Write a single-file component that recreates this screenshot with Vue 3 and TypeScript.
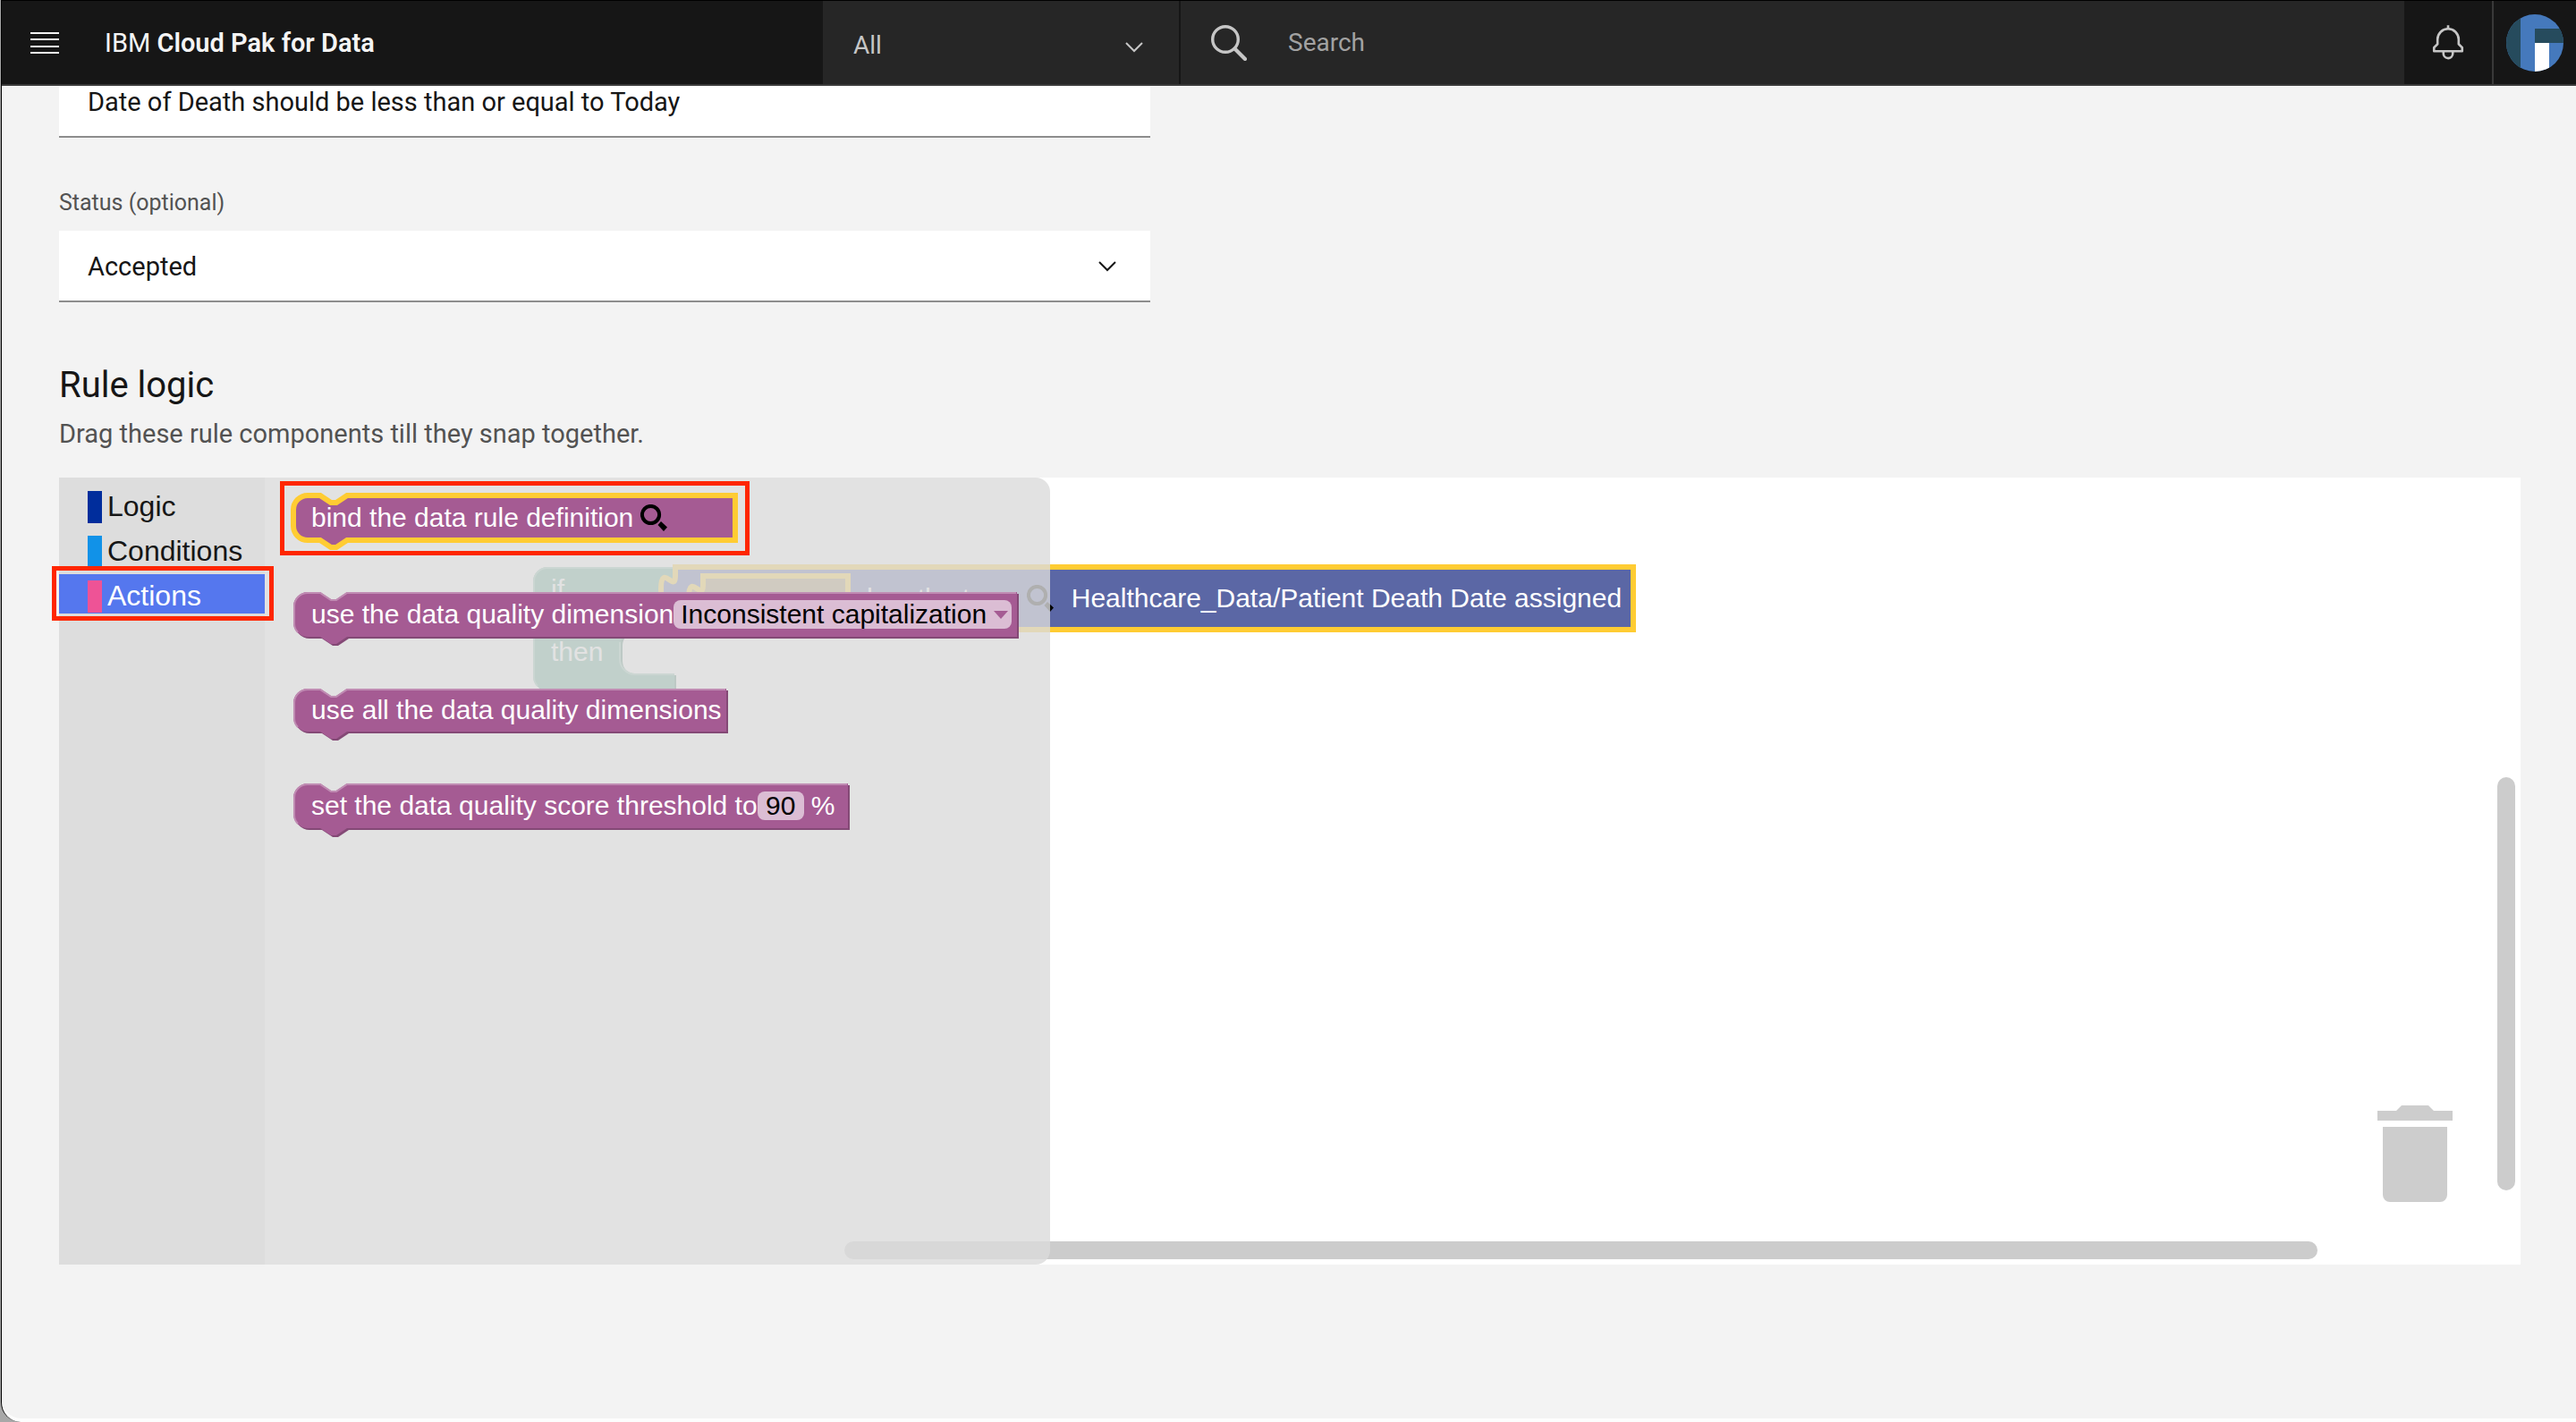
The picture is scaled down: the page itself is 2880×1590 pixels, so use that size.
<script setup lang="ts">
import { ref } from 'vue'

interface Category {
  name: string
  color: string
}

interface ActionBlock {
  id: string
  x: number
  y: number
  w: number
  h: number
  label: string
  kind: 'search' | 'dropdown' | 'plain' | 'number'
  selected?: boolean
}

const categories: Category[] = [
  { name: 'Logic', color: '#002d9c' },
  { name: 'Conditions', color: '#1192e8' },
  { name: 'Actions', color: '#ee5396' },
]
const active = ref('Actions')

const scope = ref('All')
const query = ref('')
const description = ref('Date of Death should be less than or equal to Today')
const status = ref('Accepted')
const dimension = ref('Inconsistent capitalization')
const threshold = ref('90')

const actions: ActionBlock[] = [
  { id: 'bind', x: 32, y: 20, w: 494, h: 50, label: 'bind the data rule definition', kind: 'search', selected: true },
  { id: 'use', x: 32, y: 128, w: 809, h: 50, label: 'use the data quality dimension', kind: 'dropdown' },
  { id: 'all', x: 32, y: 236, w: 484, h: 48, label: 'use all the data quality dimensions', kind: 'plain' },
  { id: 'set', x: 32, y: 342, w: 620, h: 50, label: 'set the data quality score threshold to', kind: 'number' },
]

const notch = 'l12 8h6l12 -8'

function outline(w: number, h: number): string {
  return `M0 16A16 16 0 0 1 16 0H30${notch}H${w}V${h}H60l-12 8h-6l-12 -8H16A16 16 0 0 1 0 ${h - 16}Z`
}

function highlight(w: number, h: number): string {
  return `M5 ${h - 5}A15 15 0 0 1 1 ${h - 16}V16A15 15 0 0 1 16 1H30${notch}H${w - 1}`
}

const socket = 'c0 20 -16 -16 -16 15s16 -5 16 15'
const socketUp = 'c0 -20 -16 16 -16 -15s16 5 16 -15'

const ifOutline = `M0 16A16 16 0 0 1 16 0H158V10${socket}V70H114a16 16 0 0 0 -16 16V103a16 16 0 0 0 16 16H158V138H16A16 16 0 0 1 0 122Z`

function valueOutline(w: number, h: number): string {
  return `M0 0H${w}V${h}H0V40${socketUp}Z`
}
</script>

<template>
  <div class="desktop">
    <div class="window">
      <header class="bar">
        <div class="bar-brand">
          <button class="menu" type="button" aria-label="Menu">
            <svg width="32" height="24" viewBox="0 0 32 24" fill="#f4f4f4">
              <path d="M0 0h32v2H0zM0 7h32v2H0zM0 15h32v2H0zM0 22h32v2H0z" />
            </svg>
          </button>
          <a class="brand" href="#">IBM <b>Cloud Pak for Data</b></a>
        </div>
        <div class="scope">
          <select v-model="scope" aria-label="Search scope">
            <option>All</option>
          </select>
          <svg class="chevron" width="20" height="12" viewBox="0 0 20 12" fill="none" stroke="#c6c6c6" stroke-width="2">
            <path d="M1 1l9 9 9-9" />
          </svg>
        </div>
        <label class="search">
          <svg width="40" height="40" viewBox="0 0 40 40" fill="none" stroke="#c6c6c6">
            <circle cx="16" cy="16" r="14.3" stroke-width="3.4" />
            <path d="M26.5 26.5L38 38" stroke-width="4.2" stroke-linecap="round" />
          </svg>
          <input v-model="query" type="text" placeholder="Search" aria-label="Search" />
        </label>
        <button class="bell" type="button" aria-label="Notifications">
          <svg width="42" height="42" viewBox="0 0 32 32" fill="#c6c6c6">
            <path d="M28.707 19.293L26 16.586V13a10.014 10.014 0 0 0-9-9.95V1h-2v2.05A10.014 10.014 0 0 0 6 13v3.586l-2.707 2.707A1 1 0 0 0 3 20v3a1 1 0 0 0 1 1h7v.777a5.152 5.152 0 0 0 4.5 5.199A5.006 5.006 0 0 0 21 25v-1h7a1 1 0 0 0 1-1v-3a1 1 0 0 0-.293-.707zM19 25a3 3 0 0 1-6 0v-1h6zm8-3H5v-1.586l2.707-2.707A1 1 0 0 0 8 17v-4a8 8 0 0 1 16 0v4a1 1 0 0 0 .293.707L27 20.414z" />
          </svg>
        </button>
        <button class="account" type="button" aria-label="Account">
          <svg width="64" height="64" viewBox="0 0 64 64">
            <clipPath id="avatar"><circle cx="32" cy="32" r="32" /></clipPath>
            <g clip-path="url(#avatar)">
              <path fill="#4579bc" d="M0 0h64v64H0z" />
              <path fill="#264b5d" d="M0 0h16v64H0zM32 16h32v16H32z" />
              <path fill="#fff" d="M32 32h16v32H32z" />
            </g>
          </svg>
        </button>
      </header>

      <main class="page">
        <input v-model="description" class="field-text" type="text" aria-label="Description" />

        <label class="field-label" for="status">Status (optional)</label>
        <div class="field-select">
          <select id="status" v-model="status">
            <option>Accepted</option>
          </select>
          <svg class="chevron" width="20" height="12" viewBox="0 0 20 12" fill="none" stroke="#161616" stroke-width="2">
            <path d="M1 1l9 9 9-9" />
          </svg>
        </div>

        <h2>Rule logic</h2>
        <p class="hint">Drag these rule components till they snap together.</p>

        <section class="canvas">
          <nav class="toolbox">
            <button
              v-for="c in categories"
              :key="c.name"
              type="button"
              class="category"
              :class="{ active: c.name === active }"
              @click="active = c.name"
            >
              <span class="swatch" :style="{ background: c.color }"></span>
              <span class="category-name">{{ c.name }}</span>
            </button>
          </nav>

          <div class="workspace">
            <div class="block if-block">
              <svg class="shape" width="160" height="142">
                <path fill="#498470" transform="translate(2 2)" :d="ifOutline" />
                <path fill="#5ba58c" :d="ifOutline" />
                <path fill="none" stroke="#8cc0ae" stroke-width="2" d="M5 133A15 15 0 0 1 1 122V16A15 15 0 0 1 16 1H158M97 84V103A17 17 0 0 0 114 120H158" />
              </svg>
              <span>if</span>
              <span>then</span>
            </div>

            <div class="block term-block">
              <svg class="shape" width="1071" height="70">
                <path fill="#5b67a5" stroke="#fc3" stroke-width="6" :d="valueOutline(1071, 70)" />
                <path fill="#a58c5b" stroke="#fc3" stroke-width="6" transform="translate(31 10)" :d="valueOutline(162, 50)" />
              </svg>
              <span>has the term</span>
              <svg class="lens" width="30" height="30" viewBox="0 0 30 30">
                <circle cx="11.5" cy="11.5" r="9.6" fill="none" stroke="#000" stroke-width="4" />
                <path d="M23 19l7 6.5-4 4.5-6.5-7z" />
              </svg>
              <span class="term">Healthcare_Data/Patient Death Date assigned</span>
            </div>

            <div class="scroll-x"></div>
            <div class="scroll-y"></div>
            <svg class="trash" width="84" height="108" viewBox="0 0 84 108" fill="#cdcdcd">
              <path d="M0 6h21l6-6h30l6 6h21v11H0zM6 24h72v76a8 8 0 0 1-8 8H14a8 8 0 0 1-8-8z" />
            </svg>

            <div class="flyout"></div>

            <div
              v-for="b in actions"
              :key="b.id"
              class="block action"
              :style="{ left: b.x + 'px', top: b.y + 'px', width: b.w + 'px', height: b.h + 'px' }"
            >
              <svg class="shape" :width="b.w" :height="b.h">
                <template v-if="b.selected">
                  <path fill="#a55b93" stroke="#fc3" stroke-width="6" :d="outline(b.w, b.h)" />
                </template>
                <template v-else>
                  <path fill="#844976" transform="translate(2 2)" :d="outline(b.w, b.h)" />
                  <path fill="#a55b93" :d="outline(b.w, b.h)" />
                  <path fill="none" stroke="#c08cb3" stroke-width="2" :d="highlight(b.w, b.h)" />
                </template>
              </svg>
              <span>{{ b.label }}</span>
              <svg v-if="b.kind === 'search'" class="lens" width="30" height="30" viewBox="0 0 30 30">
                <circle cx="11.5" cy="11.5" r="9.6" fill="none" stroke="#000" stroke-width="4" />
                <path d="M23 19l7 6.5-4 4.5-6.5-7z" />
              </svg>
              <div v-if="b.kind === 'dropdown'" class="pick">
                <select v-model="dimension" aria-label="Data quality dimension">
                  <option>Inconsistent capitalization</option>
                </select>
                <svg width="16" height="9" viewBox="0 0 16 9" fill="#a55b93"><path d="M0 0h16L8 9z" /></svg>
              </div>
              <template v-if="b.kind === 'number'">
                <input v-model="threshold" class="number" type="text" aria-label="Score threshold" />
                <span>%</span>
              </template>
            </div>
          </div>

          <div class="callout callout-category"></div>
          <div class="callout callout-block"></div>
        </section>
      </main>
    </div>
  </div>
</template>

<style>
body {
  background: #a8a8a8;
}
</style>

<style scoped>
* {
  box-sizing: border-box;
}
.desktop {
  padding-left: 1px;
  background: #a8a8a8;
}
.window {
  display: flex;
  flex-direction: column;
  min-height: 100vh;
  overflow: hidden;
  border-left: 1px solid #000;
  border-bottom-left-radius: 22px;
  background: #f3f3f3;
  box-shadow: inset 0 -4px #fdfdfd;
  color: #161616;
  font-family: Roboto, "Noto Sans", sans-serif;
  font-size: 29px;
}
button,
input,
select {
  margin: 0;
  padding: 0;
  border: 0;
  border-radius: 0;
  outline: 0;
  background: none;
  color: inherit;
  font: inherit;
  appearance: none;
}
button {
  cursor: pointer;
}
svg {
  display: block;
  flex: none;
}

.bar {
  position: relative;
  z-index: 2;
  display: flex;
  height: 96px;
  border-top: 1px solid #000;
  border-bottom: 2px solid #393939;
  background: #161616;
}
.bar-brand {
  display: flex;
  flex: 0 0 918px;
  align-items: center;
}
.menu {
  display: flex;
  align-items: center;
  justify-content: center;
  width: 96px;
  height: 100%;
}
.brand {
  padding-left: 19px;
  color: #f4f4f4;
  text-decoration: none;
}
.brand b {
  font-weight: 600;
}
.scope {
  position: relative;
  flex: 0 0 398px;
  background: #262626;
  color: #c6c6c6;
  font-size: 28px;
}
.scope select {
  width: 100%;
  height: 100%;
  padding: 6px 80px 0 34px;
}
.chevron {
  position: absolute;
  top: 46px;
  right: 40px;
  pointer-events: none;
}
.search {
  display: flex;
  flex: 1;
  align-items: center;
  gap: 46px;
  margin-left: 2px;
  padding-left: 34px;
  background: #262626;
  color: #c6c6c6;
  font-size: 28px;
}
.search input {
  flex: 1;
  height: 100%;
}
.search input::placeholder {
  color: #a2a2a2;
  opacity: 1;
}
.bell,
.account {
  display: flex;
  align-items: center;
  justify-content: center;
}
.bell {
  flex: 0 0 98px;
}
.account {
  flex: 0 0 94px;
  border-left: 2px solid #393939;
}

.page {
  display: flex;
  flex: 1;
  flex-direction: column;
  margin-top: -22px;
  padding: 0 62px 176px 64px;
}
.field-text,
.field-select {
  width: 100%;
  max-width: 1220px;
  height: 80px;
  border-bottom: 2px solid #8d8d8d;
  background: #fff;
}
.field-text {
  padding: 2px 32px 0;
}
.field-label {
  margin: 57px 0 15px;
  color: #525252;
  font-size: 25px;
  line-height: 32px;
}
.field-select {
  position: relative;
}
.field-select select {
  width: 100%;
  height: 100%;
  padding: 2px 80px 0 32px;
}
.field-select .chevron {
  top: 34px;
  right: 38px;
}
h2 {
  margin: 69px 0 12px;
  font-size: 40px;
  font-weight: 400;
  line-height: 48px;
}
.hint {
  margin: 0 0 31px;
  color: #525252;
  line-height: 36px;
}

.canvas {
  position: relative;
  display: flex;
  flex: 1;
  min-height: 880px;
  background: #fff;
  font-family: "Liberation Sans", Arial, sans-serif;
}
.toolbox {
  display: flex;
  flex: 0 0 230px;
  flex-direction: column;
  gap: 6px;
  padding-top: 8px;
  background: #ddd;
  font-size: 32px;
}
.category {
  display: flex;
  align-items: flex-end;
  gap: 6px;
  height: 44px;
  padding: 0 0 1px 32px;
  text-align: left;
}
.category.active {
  background: #5577ee;
  color: #fff;
}
.swatch {
  width: 16px;
  height: 36px;
}
.category-name {
  line-height: 38px;
}
.workspace {
  position: relative;
  flex: 1;
}

.block {
  position: absolute;
  color: #fff;
  font-size: 30px;
  line-height: 50px;
  white-space: nowrap;
}
.shape {
  position: absolute;
  top: 0;
  left: 0;
  z-index: -1;
  overflow: visible;
}
.if-block {
  z-index: 0;
  top: 100px;
  left: 300px;
  display: flex;
  flex-direction: column;
  gap: 20px;
  padding-left: 20px;
}
.term-block {
  z-index: 0;
  top: 100px;
  left: 459px;
  display: flex;
  align-items: center;
  width: 1071px;
  height: 70px;
  padding-left: 214px;
  gap: 12px;
}
.term {
  margin-left: 8px;
}
.scroll-x,
.scroll-y {
  position: absolute;
  border-radius: 10px;
  background: #ccc;
}
.scroll-x {
  right: 227px;
  bottom: 6px;
  left: 648px;
  height: 20px;
}
.scroll-y {
  top: 335px;
  right: 6px;
  bottom: 83px;
  width: 20px;
}
.trash {
  position: absolute;
  right: 76px;
  bottom: 70px;
}
.flyout {
  position: absolute;
  top: 0;
  bottom: 0;
  left: 0;
  z-index: 1;
  width: 878px;
  border-radius: 0 16px 16px 0;
  background: #dbdbdb;
  opacity: 0.8;
}
.action {
  z-index: 2;
  display: flex;
  align-items: center;
  padding-left: 20px;
}
.action .lens {
  margin-left: 8px;
}
.pick {
  display: flex;
  align-items: center;
  height: 32px;
  padding-right: 4px;
  border-radius: 8px;
  background: #dbbdd4;
  color: #000;
}
.pick select {
  height: 32px;
  padding: 0 8px;
  line-height: 32px;
}
.number {
  width: 52px;
  height: 32px;
  margin-right: 8px;
  border-radius: 8px;
  background: #dbbdd4;
  color: #000;
  text-align: center;
}

.callout {
  position: absolute;
  z-index: 3;
  border: 5px solid #ff2600;
  pointer-events: none;
}
.callout-category {
  top: 99px;
  left: -8px;
  width: 248px;
  height: 61px;
}
.callout-block {
  top: 4px;
  left: 247px;
  width: 525px;
  height: 83px;
}
</style>
